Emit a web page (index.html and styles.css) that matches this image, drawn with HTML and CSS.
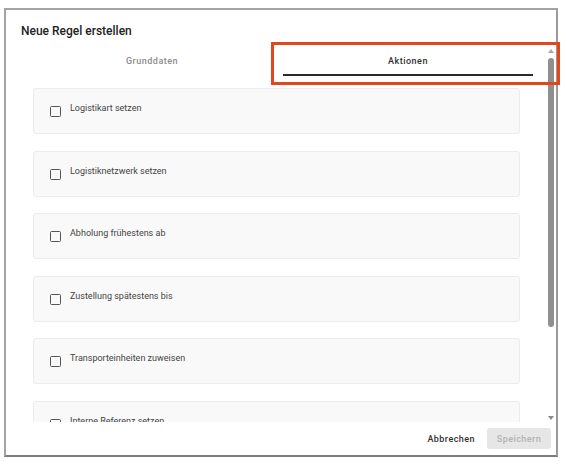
FILE: index.html
```html
<!DOCTYPE html>
<html lang="de">
<head>
<meta charset="utf-8">
<title>Neue Regel erstellen</title>
<link rel="stylesheet" href="styles.css">
</head>
<body>
<div class="frame">
  <div class="dialog">
    <div class="header">Neue Regel erstellen</div>
    <div class="body">
      <div class="content">
        <div class="tabs">
          <div class="tab">Grunddaten</div>
          <div class="tab active">Aktionen</div>
        </div>
        <div class="list">
          <div class="card"><span class="check"></span><span class="label">Logistikart setzen</span></div>
          <div class="card"><span class="check"></span><span class="label">Logistiknetzwerk setzen</span></div>
          <div class="card"><span class="check"></span><span class="label">Abholung frühestens ab</span></div>
          <div class="card"><span class="check"></span><span class="label">Zustellung spätestens bis</span></div>
          <div class="card"><span class="check"></span><span class="label">Transporteinheiten zuweisen</span></div>
          <div class="card"><span class="check"></span><span class="label">Interne Referenz setzen</span></div>
        </div>
      </div>
      <div class="scrollbar">
        <span class="arrow up"></span>
        <div class="track"><div class="thumb"></div></div>
        <span class="arrow down"></span>
      </div>
    </div>
    <div class="footer">
      <span class="cancel">Abbrechen</span>
      <span class="save">Speichern</span>
    </div>
  </div>
</div>
<div class="highlight"></div>
</body>
</html>
```

FILE: styles.css
```css
* { box-sizing: border-box; }
html, body { margin: 0; padding: 0; background: #fff; }
body {
  font-family: Roboto, "Liberation Sans", sans-serif;
  width: 567px;
  height: 464px;
  position: relative;
  overflow: hidden;
}
.frame {
  margin: 8px 0 0 4px;
  width: 554px;
  height: 449px;
  border: 2px solid #a3a3a3;
  border-bottom-color: #7d7d7d;
  border-right-color: #9a9a9a;
  background: #fff;
}
.dialog {
  display: flex;
  flex-direction: column;
  height: 100%;
  border-radius: 3px;
  background: #fff;
}
.header {
  padding: 14px 0 7px 15px;
  font-size: 12px;
  line-height: 14px;
  font-weight: 500;
  color: #222;
}
.body {
  display: flex;
  height: 377px;
}
.content {
  flex: 1;
  overflow: hidden;
}
.tabs {
  display: flex;
  gap: 6px;
  padding-left: 21px;
  height: 43px;
}
.tab {
  width: 250px;
  height: 31px;
  padding-top: 10px;
  text-align: center;
  font-size: 9px;
  line-height: 12px;
  font-weight: 500;
  letter-spacing: 0.5px;
  color: #8c8c8c;
}
.tab.active {
  color: #333;
  border-bottom: 2px solid #2a2a2a;
}
.list {
  padding-left: 27px;
  display: flex;
  flex-direction: column;
  gap: 16.6px;
}
.card {
  width: 487px;
  height: 46px;
  flex: none;
  background: #f9f9f9;
  border: 1px solid #ececec;
  border-radius: 3px;
  padding: 17px 16px;
  display: flex;
  align-items: flex-start;
  gap: 9px;
}
.check {
  width: 11px;
  height: 11px;
  flex: none;
  border: 1.5px solid #555;
  border-radius: 1.5px;
}
.label {
  margin-top: -4px;
  font-size: 9px;
  line-height: 12px;
  color: #444;
}
.scrollbar {
  width: 10px;
  display: flex;
  flex-direction: column;
  align-items: center;
  padding-top: 4px;
  padding-bottom: 2px;
}
.arrow {
  width: 0;
  height: 0;
  border-left: 3px solid transparent;
  border-right: 3px solid transparent;
}
.arrow.up { border-bottom: 4px solid #a8a8a8; }
.arrow.down { border-top: 4px solid #8a8a8a; }
.track {
  flex: 1;
  width: 6px;
  padding: 5px 0 0;
}
.thumb {
  height: 269px;
  width: 6px;
  border-radius: 3px;
  background: #8f8f8f;
}
.footer {
  flex: 1;
  display: flex;
  align-items: center;
  justify-content: flex-end;
  gap: 12px;
  padding-right: 5px;
}
.cancel {
  font-size: 9px;
  font-weight: 500;
  letter-spacing: 0.45px;
  color: #333;
}
.save {
  width: 64px;
  height: 21px;
  border-radius: 3px;
  background: #e6e6e6;
  color: #b3b3b3;
  font-size: 9px;
  font-weight: 500;
  letter-spacing: 0.45px;
  display: flex;
  align-items: center;
  justify-content: center;
}
.highlight {
  position: absolute;
  left: 271px;
  top: 42px;
  width: 289px;
  height: 43px;
  border: 3px solid #e4461c;
}
```
